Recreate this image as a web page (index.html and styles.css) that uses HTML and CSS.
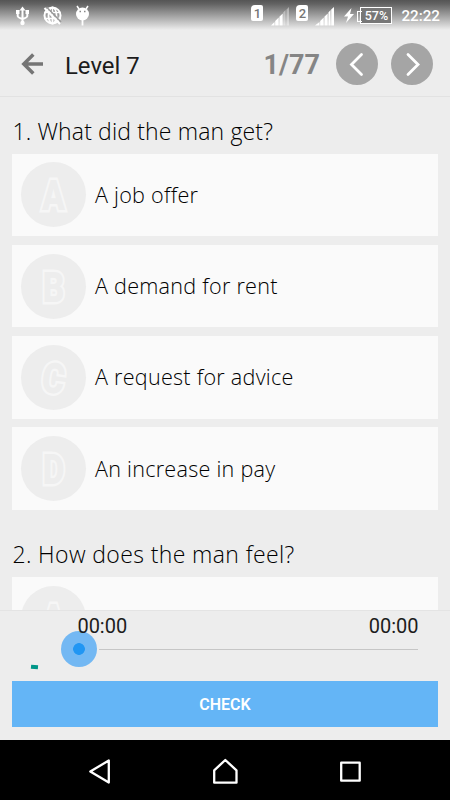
FILE: index.html
```
<!DOCTYPE html>
<html lang="en">
<head>
  <meta charset="UTF-8">
  <meta name="viewport" content="width=device-width, initial-scale=1.0">
  <title>Level 7</title>
  <link rel="stylesheet" href="styles.css">
</head>
<body>
  <div class="screen">
    <div class="status-bar">
      <svg class="status-icons" width="82" height="28" viewBox="0 0 82 28" fill="none" stroke="#fff">
        <!-- usb -->
        <path d="M7.500 9v13M2.700 12v4q0 1.500 4.800 3M12.300 12v4q0 1.500-4.800 3" stroke-width="2"/>
        <path d="M7.500 6.500l3 4h-6zM1 10h3.500v4H1zM10.500 10H14v4h-3.500z" fill="#fff" stroke="none"/>
        <circle cx="7.500" cy="23" r="2.200" fill="#fff" stroke="none"/>
        <!-- no network -->
        <circle cx="37.500" cy="15.500" r="8" stroke-width="2"/>
        <path d="M29.500 12.500h16M29.500 18.500h16M37.500 7.500v16" stroke-width="1.600"/>
        <ellipse cx="37.500" cy="15.500" rx="4" ry="8" stroke-width="1.800"/>
        <path d="M31.500 7l14.500 15" stroke="#999" stroke-width="1.500"/>
        <path d="M29.500 8l15.500 16" stroke-width="2"/>
        <!-- debugging -->
        <circle cx="67.500" cy="14" r="6.500" fill="#fff" stroke="none"/>
        <path d="M64 9l-2-3M71 9l2-3" stroke-width="1.500"/>
        <path d="M67.500 20v5.500" stroke-width="1.800"/>
        <path d="M64.500 11.500h1.500M69 11.500h1.500" stroke="#888" stroke-width="1.300"/>
      </svg>
      <div class="status-right">
        <span class="sim">1</span>
        <svg class="signal" width="20" height="20" viewBox="0 0 20 20" fill="#fff">
          <path d="M1 19.500h3.500V16zM5.200 19.500h3.500v-8l-3.500 3.500zM9.400 19.500h3.300v-12l-3.300 3.300z"/>
          <path d="M13.200 19.500h2.300V4l-2.300 2.500zM16.500 19.500H19V1l-2.500 2.500z" opacity=".4"/>
        </svg>
        <span class="sim">2</span>
        <svg class="signal signal-full" width="20" height="20" viewBox="0 0 20 20" fill="#fff">
          <path d="M0 19.500h4.500V16zM5.200 19.500h3.500v-8l-3.500 3.500zM9.400 19.500h3.300v-12l-3.300 3.300zM13.400 19.500h2.200V4l-2.200 2.500zM16.200 19.500H19V1l-2.800 2.500z"/>
        </svg>
        <svg class="bolt" width="10" height="15" viewBox="0 0 10 15" fill="#fff">
          <path d="M7.500 0L0 8.500h4L2 15l8-9H6z"/>
        </svg>
        <span class="battery">57%</span>
        <span class="clock">22:22</span>
      </div>
    </div>

    <header class="toolbar">
      <svg class="back" width="22" height="22" viewBox="0 0 22 22" fill="none" stroke="#757575" stroke-width="3.500">
        <path d="M12.300 1.500L2.800 11l9.500 9.500M3 11h19"/>
      </svg>
      <h1>Level 7</h1>
      <span class="counter">1/77</span>
      <span class="round-button">
        <svg width="42" height="42" viewBox="0 0 42 42"><path d="M25.500 11.500L15.500 21.500l10 10"/></svg>
      </span>
      <span class="round-button">
        <svg width="42" height="42" viewBox="0 0 42 42"><path d="M17 11.500l10 10-10 10"/></svg>
      </span>
    </header>

    <main class="questions">
      <h2 class="q1">1. What did the man get?</h2>
      <div class="answers">
        <div class="answer"><span class="letter"><b>A</b></span><span class="text">A job offer</span></div>
        <div class="answer"><span class="letter"><b>B</b></span><span class="text">A demand for rent</span></div>
        <div class="answer"><span class="letter letter-c"><b>C</b></span><span class="text">A request for advice</span></div>
        <div class="answer"><span class="letter"><b>D</b></span><span class="text">An increase in pay</span></div>
      </div>
      <h2 class="q2">2. How does the man feel?</h2>
      <div class="answers">
        <div class="answer"><span class="letter"><b>A</b></span><span class="text">Excited</span></div>
      </div>
    </main>

    <footer class="player">
      <div class="times"><span>00:00</span><span>00:00</span></div>
      <div class="seek">
        <span class="spinner"></span>
        <span class="thumb"></span>
        <span class="track"></span>
      </div>
      <div class="check">CHECK</div>
    </footer>

    <nav class="nav-bar">
      <svg width="26" height="28" viewBox="0 0 26 28"><path d="M21.800 3.500v22L3.300 14.500z"/></svg>
      <svg width="26" height="28" viewBox="0 0 26 28"><path d="M13.300 3L2.200 13.300v12.400h22.300V13.300z"/></svg>
      <svg width="26" height="28" viewBox="0 0 26 28"><path d="M4.200 5.700h18.500v18H4.200z"/></svg>
    </nav>
  </div>
</body>
</html>
```
FILE: styles.css
```
* {
  margin: 0;
  padding: 0;
  box-sizing: border-box;
}

body {
  width: 450px;
  height: 800px;
  overflow: hidden;
  background: #ededed;
  color: #1c1c1c;
  font-family: Roboto, sans-serif;
}

svg {
  display: block;
  flex: none;
}

.screen {
  display: flex;
  flex-direction: column;
  height: 800px;
}

/* status bar */
.status-bar {
  display: flex;
  justify-content: space-between;
  height: 32px;
  padding-left: 15px;
  background: linear-gradient(#555 0, #636363 4px, #ededed 30px);
  color: #fff;
}

.status-right {
  display: flex;
  padding-right: 10px;
}

.sim {
  width: 12px;
  height: 16px;
  margin-top: 5px;
  border-radius: 4px 2px 2px 2px;
  background: #fff;
  color: #777;
  font-size: 13px;
  font-weight: 500;
  line-height: 17px;
  text-align: center;
}

.signal {
  margin: 6px 6px 0 7px;
}

.signal-full {
  margin-right: 9px;
}

.bolt {
  margin: 8px 4px 0 0;
}

.battery {
  position: relative;
  width: 32px;
  height: 17px;
  margin: 7px 9px 0 2px;
  border: 1.5px solid #fff;
  background: #777;
  font-size: 12.5px;
  font-weight: 500;
  line-height: 15px;
  text-align: center;
}

.battery::before {
  content: "";
  position: absolute;
  left: -4px;
  top: 3px;
  width: 4px;
  height: 9px;
  border: 1px solid #fff;
  border-right: 0;
}

.clock {
  font-size: 15.2px;
  font-weight: 500;
  line-height: 32px;
}

/* toolbar */
.toolbar {
  display: flex;
  align-items: center;
  height: 65px;
  padding: 0 17px 0 21px;
  border-bottom: 1px solid #e2e2e2;
}

.back {
  margin-right: 22px;
}

.toolbar h1 {
  flex: 1;
  padding-top: 4px;
  font-size: 23.9px;
  font-weight: 370;
}

.counter {
  margin-right: 16px;
  padding-top: 1px;
  color: #858585;
  font-size: 27px;
  font-weight: 700;
}

.round-button {
  width: 42px;
  height: 42px;
  border-radius: 50%;
  background: #a5a5a5;
}

.round-button + .round-button {
  margin-left: 13px;
}

.round-button path {
  fill: none;
  stroke: #fff;
  stroke-width: 2.8;
  stroke-linecap: round;
}

/* questions */
.questions {
  height: 513px;
  padding: 0 12.4px;
  overflow: hidden;
  color: #000;
}

.questions h2 {
  height: 56.5px;
  font-family: "Open Sans", sans-serif;
  font-size: 23px;
  font-weight: 320;
  letter-spacing: .15px;
  line-height: 68px;
  white-space: nowrap;
}

.questions .q2 {
  height: 67px;
  letter-spacing: .38px;
  line-height: 88px;
}

.answers {
  display: flex;
  flex-direction: column;
  gap: 8.8px;
}

.answer {
  display: flex;
  align-items: center;
  height: 82.5px;
  padding-left: 8.6px;
  background: #fafafa;
}

.letter {
  width: 65px;
  height: 65px;
  margin-right: 9px;
  border-radius: 50%;
  background: #ededed;
  text-align: center;
}

.letter b {
  display: block;
  color: #ededed;
  font-size: 42px;
  font-weight: 900;
  line-height: 67px;
  transform: scaleX(.8);
  -webkit-text-stroke: 5px #f6f6f6;
  paint-order: stroke fill;
  stroke-linejoin: round;
}

.letter-c b {
  transform: rotate(8deg) scaleX(.82);
}

.text {
  padding-bottom: 1px;
  font-family: "Open Sans", sans-serif;
  font-size: 21.6px;
  font-weight: 310;
  letter-spacing: .25px;
  white-space: nowrap;
}

/* audio player */
.player {
  height: 130px;
  padding: 0 12.4px;
  border-top: 1px solid #e4e4e4;
}

.times {
  position: relative;
  z-index: 1;
  display: flex;
  justify-content: space-between;
  height: 20px;
  padding: 0 19px 0 65px;
  font-size: 20px;
  line-height: 30px;
}

.seek {
  display: flex;
  align-items: center;
  height: 36px;
  padding: 0 20px 0 18.4px;
}

.spinner {
  width: 7px;
  height: 4px;
  margin: 36px 23px 0 0;
  background: #009688;
  transform: rotate(5deg);
}

.thumb {
  width: 36px;
  height: 36px;
  border-radius: 50%;
  background: radial-gradient(circle, #2196f3 5.5px, #73b8f3 6.2px);
}

.track {
  flex: 1;
  height: 1px;
  margin-left: 2px;
  background: #c6c6c6;
}

.check {
  height: 46px;
  margin-top: 14px;
  background: #64b5f6;
  color: #fff;
  font-size: 16px;
  font-weight: 600;
  line-height: 48px;
  text-align: center;
}

/* system navigation */
.nav-bar {
  display: flex;
  justify-content: space-between;
  height: 60px;
  padding: 17px 87px 0;
  background: #000;
}

.nav-bar path {
  fill: none;
  stroke: #fff;
  stroke-width: 2.3;
  stroke-linejoin: round;
}
```
